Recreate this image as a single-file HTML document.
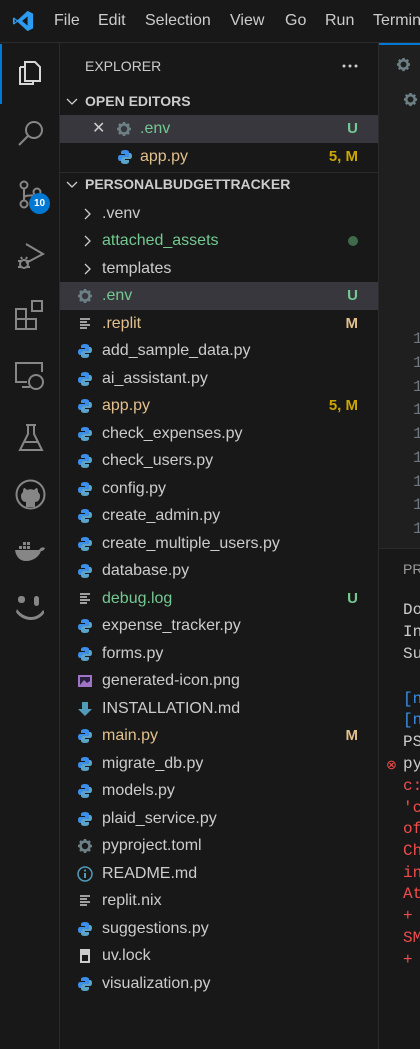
<!DOCTYPE html>
<html><head><meta charset="utf-8"><style>
*{margin:0;padding:0;box-sizing:border-box}
html,body{overflow:hidden}
body{width:420px;height:1049px;background:#181818;font-family:"Liberation Sans",sans-serif;color:#cccccc;position:relative}
.title{position:absolute;left:0;top:0;width:420px;height:43px;background:#181818;border-bottom:1px solid #2b2b2b;overflow:hidden}
.menu{position:absolute;top:12px;font-size:16px;color:#cccccc;white-space:nowrap}
.act{position:absolute;left:0;top:43px;width:60px;height:1006px;background:#181818;border-right:1px solid #2b2b2b}
.side{position:absolute;left:60px;top:43px;width:319px;height:1006px;background:#181818;border-right:1px solid #2b2b2b;overflow:hidden}
.row{position:absolute;left:0;width:318px;height:27.5px;font-size:16px;line-height:27.5px;white-space:nowrap}
.row .n{position:absolute;left:42px}
.row .b{position:absolute;right:20px;font-weight:bold;font-size:15px}
.ic{position:absolute;left:17px;top:6px;width:16px;height:16px}
.sel{background:#37373d}
.g{color:#73c991}.y{color:#e2c08d}.yb{color:#cca700}
.ed{position:absolute;left:379px;top:43px;width:41px;height:505px;background:#1f1f1f;overflow:hidden}
.ln{position:absolute;left:413px;font-family:"Liberation Mono",monospace;font-size:16px;color:#6e7681}
.panel{position:absolute;left:379px;top:548px;width:41px;height:501px;background:#181818;border-top:1px solid #2b2b2b}
.t{position:absolute;left:403px;font-family:"Liberation Mono",monospace;font-size:16px;white-space:nowrap}
.r{color:#f14c4c}.bl{color:#3b8eea}
</style></head><body>
<div class="title">
<svg style="position:absolute;left:12px;top:10px" width="22" height="22" viewBox="0 0 24 24"><path d="M17 1 L23 4 V20 L17 23 L6 13 L2 16 L1 15 V9 L2 8 L6 11 Z M17 7 L11 12 L17 17 Z M3 10 V14 L5 12 Z" fill="#2d9cf0"/></svg>
<span class="menu" style="left:54px">File</span>
<span class="menu" style="left:98px">Edit</span>
<span class="menu" style="left:145px">Selection</span>
<span class="menu" style="left:230px">View</span>
<span class="menu" style="left:285px">Go</span>
<span class="menu" style="left:325px">Run</span>
<span class="menu" style="left:373px">Terminal</span>
</div>
<div class="act">
<div style="position:absolute;left:0;top:1px;width:2px;height:60px;background:#0078d4"></div>
<svg style="position:absolute;left:16px;top:15px" width="28" height="30" viewBox="0 0 28 30" fill="none" stroke="#d7d7d7" stroke-width="2"><path d="M9 4h10l5 5v14H9z"/><path d="M4 9h5M4 9v17h13v-3"/></svg>
<svg style="position:absolute;left:16px;top:75px" width="30" height="30" viewBox="0 0 30 30" fill="none" stroke="#868686" stroke-width="2"><circle cx="18" cy="12" r="8"/><path d="M12 18L3 27"/></svg>
<svg style="position:absolute;left:16px;top:137px" width="28" height="30" viewBox="0 0 28 30" fill="none" stroke="#868686" stroke-width="2"><circle cx="8" cy="5" r="3.5"/><circle cx="8" cy="24" r="3.5"/><circle cx="21" cy="12" r="3.5"/><path d="M8 9v11M8 18c0-4 13-2 13-3"/></svg>
<div style="position:absolute;left:29px;top:150px;width:21px;height:21px;border-radius:50%;background:#0078d4;color:#fff;font-size:10px;font-weight:bold;text-align:center;line-height:21px">10</div>
<svg style="position:absolute;left:14px;top:198px" width="32" height="32" viewBox="0 0 32 32" fill="none" stroke="#868686" stroke-width="2"><path d="M12 3L29 13L12 22"/><circle cx="10" cy="23" r="4"/><path d="M4 20h3M4 26h3M13 20h3M13 26h3M8 18l-1-2M12 18l1-2"/></svg>
<svg style="position:absolute;left:15px;top:257px" width="30" height="32" viewBox="0 0 30 32" fill="none" stroke="#868686" stroke-width="2"><rect x="1" y="9" width="10" height="10"/><rect x="1" y="19" width="10" height="10"/><rect x="11" y="19" width="10" height="10"/><rect x="17" y="1" width="10" height="10"/></svg>
<svg style="position:absolute;left:15px;top:318px" width="30" height="30" viewBox="0 0 30 30" fill="none" stroke="#868686" stroke-width="2"><path d="M12 21H1V2h26v9"/><path d="M7 26h8"/><circle cx="21" cy="21" r="7"/></svg>
<svg style="position:absolute;left:18px;top:380px" width="26" height="30" viewBox="0 0 26 30" fill="none" stroke="#868686" stroke-width="2"><path d="M8 2h10M10 2v9L2 27h22L16 11V2M6 19h14"/></svg>
<svg style="position:absolute;left:15px;top:436px" width="31" height="31" viewBox="0 0 31 31"><circle cx="15.5" cy="15.5" r="14" fill="none" stroke="#868686" stroke-width="2"/><path d="M11 28v-5c-3 0-5-2-5-6 0-2 1-3 2-4 0-1 0-3 1-4 1 0 2 1 3 2 2-1 5-1 7 0 1-1 2-2 3-2 1 1 1 3 1 4 1 1 2 2 2 4 0 4-2 6-5 6v5z" fill="#868686"/></svg>
<svg style="position:absolute;left:14px;top:497px" width="32" height="22" viewBox="0 0 32 22" fill="#868686"><path d="M1 10h24c2-3 4-3 6-2-1 2-2 3-4 3-2 6-8 10-15 10C6 21 2 17 1 10z"/><rect x="5" y="6" width="3" height="3"/><rect x="9" y="6" width="3" height="3"/><rect x="13" y="6" width="3" height="3"/><rect x="9" y="2" width="3" height="3"/><rect x="13" y="2" width="3" height="3"/></svg>
<svg style="position:absolute;left:16px;top:553px" width="28" height="26" viewBox="0 0 28 26" fill="#868686"><rect x="2" y="0" width="7" height="7" rx="3"/><rect x="18" y="0" width="5" height="10" rx="2.5"/><path d="M1 13c4 6 10 8 14 8s9-2 12-7l2 2c-4 6-9 8-14 8S4 22 0 16z"/></svg>
</div>
<div class="side">
<div style="position:absolute;left:25px;top:15px;font-size:14px">EXPLORER</div>
<svg style="position:absolute;left:282px;top:21px" width="16" height="4"><circle cx="2" cy="2" r="1.5" fill="#ccc"/><circle cx="8" cy="2" r="1.5" fill="#ccc"/><circle cx="14" cy="2" r="1.5" fill="#ccc"/></svg>
<div class="row" style="top:45px;font-weight:bold;font-size:14px"><svg style="position:absolute;left:6px;top:10px" width="12" height="8" viewBox="0 0 12 8" fill="none" stroke="#ccc" stroke-width="1.3"><path d="M1 1l5 5 5-5"/></svg><span style="position:absolute;left:25px">OPEN EDITORS</span></div>
<div class="row sel" style="top:72px"><span style="position:absolute;left:32px;font-size:16px">✕</span><svg class="ic" style="left:56px" viewBox="0 0 16 16"><use href="#gear"/></svg><span class="n g" style="left:80px">.env</span><span class="b g">U</span></div>
<div class="row" style="top:100px"><svg class="ic" style="left:57px" viewBox="0 0 16 16"><use href="#py"/></svg><span class="n y" style="left:80px">app.py</span><span class="b yb">5, M</span></div>
<div style="position:absolute;left:0;top:129px;width:318px;height:1px;background:#2b2b2b"></div>
<div class="row" style="top:128px;font-weight:bold;font-size:14px"><svg style="position:absolute;left:6px;top:10px" width="12" height="8" viewBox="0 0 12 8" fill="none" stroke="#ccc" stroke-width="1.3"><path d="M1 1l5 5 5-5"/></svg><span style="position:absolute;left:25px">PERSONALBUDGETTRACKER</span></div>
<div id="tree"></div>
</div>
<svg width="0" height="0" style="position:absolute"><defs>
<g id="py"><path d="M8 1C4 1 4 3 4 3v2h4v1H3S1 6 1 9s2 3 2 3h1v-2s0-2 2-2h4s2 0 2-2V3s0-2-4-2z" fill="#3b8eea"/><path d="M8 15c4 0 4-2 4-2v-2H8v-1h5s2 0 2-3-2-3-2-3h-1v2s0 2-2 2H6S4 8 4 10v3s0 2 4 2z" fill="#5ba3c9"/></g>
<g id="gear"><circle cx="8" cy="8" r="4.5" fill="none" stroke="#6d8086" stroke-width="2.6"/><g stroke="#6d8086" stroke-width="2.6"><path d="M8 1v3M8 12v3M1 8h3M12 8h3M3 3l2 2M11 11l2 2M13 3l-2 2M5 11l-2 2"/></g></g>
</defs></svg>
<script>
var P='<svg class="ic" viewBox="0 0 16 16"><use href="#py"/></svg>';
var G='<svg class="ic" viewBox="0 0 16 16"><use href="#gear"/></svg>';
var L='<svg class="ic" viewBox="0 0 16 16" stroke="#cccccc" stroke-width="1.5"><path d="M3 3h10M3 6h7M3 9h10M3 12h7"/></svg>';
var C='<svg style="position:absolute;left:24px;top:8px" width="8" height="12" viewBox="0 0 8 12" fill="none" stroke="#ccc" stroke-width="1.3"><path d="M1 1l5 5-5 5"/></svg>';
var items=[
[C,'.venv','',''],[C,'attached_assets','g','●'],[C,'templates','',''],
[G,'.env','g','U',1],[L,'.replit','y','M'],[P,'add_sample_data.py'],[P,'ai_assistant.py'],[P,'app.py','y','5, M'],
[P,'check_expenses.py'],[P,'check_users.py'],[P,'config.py'],[P,'create_admin.py'],[P,'create_multiple_users.py'],[P,'database.py'],
[L,'debug.log','g','U'],[P,'expense_tracker.py'],[P,'forms.py'],
['<svg class="ic" viewBox="0 0 16 16"><rect x="1" y="2" width="14" height="12" fill="#a074c4"/><rect x="3" y="4" width="10" height="8" fill="#2a2040"/><path d="M3 12l4-5 3 3 3-2v4z" fill="#a074c4"/></svg>','generated-icon.png'],
['<svg class="ic" viewBox="0 0 16 16"><path d="M5 1h6v7h4l-7 7-7-7h4z" fill="#519aba"/></svg>','INSTALLATION.md'],
[P,'main.py','y','M'],[P,'migrate_db.py'],[P,'models.py'],[P,'plaid_service.py'],[G,'pyproject.toml'],
['<svg class="ic" viewBox="0 0 16 16"><circle cx="8" cy="8" r="7" fill="none" stroke="#519aba" stroke-width="1.5"/><path d="M8 7v5" stroke="#519aba" stroke-width="2"/><circle cx="8" cy="4.5" r="1.1" fill="#519aba"/></svg>','README.md'],[L,'replit.nix'],[P,'suggestions.py'],
['<svg class="ic" viewBox="0 0 16 16"><rect x="3" y="1" width="10" height="14" fill="#cccccc"/><rect x="5" y="7" width="6" height="6" fill="#181818"/></svg>','uv.lock'],[P,'visualization.py']];
var h='';
items.forEach(function(it,i){
 var top=156.5+27.5*i;
 var col=it[2]||'';var b=it[3]||'';
 var bc=(b=='5, M')?'yb':col;
 var badge=b=='●'?'<span style="position:absolute;right:20px;top:9px;width:10px;height:10px;border-radius:50%;background:#3f6b4c"></span>':(b?'<span class="b '+bc+'">'+b+'</span>':'');
 h+='<div class="row'+(it[4]?' sel':'')+'" style="top:'+top+'px">'+it[0]+'<span class="n '+col+'">'+it[1]+'</span>'+badge+'</div>';
});
document.getElementById('tree').innerHTML=h;
</script>
<div class="ed">
<div style="position:absolute;left:0;top:0;width:41px;height:2px;background:#0078d4"></div>
<svg style="position:absolute;left:17px;top:14px" width="15" height="15" viewBox="0 0 16 16"><use href="#gear"/></svg>
<svg style="position:absolute;left:24px;top:49px" width="15" height="15" viewBox="0 0 16 16"><use href="#gear"/></svg>
</div>
<div class="ln" style="top:330px">1</div><div class="ln" style="top:354px">1</div><div class="ln" style="top:378px">1</div><div class="ln" style="top:401px">1</div><div class="ln" style="top:425px">1</div><div class="ln" style="top:449px">1</div><div class="ln" style="top:473px">1</div><div class="ln" style="top:496px">1</div><div class="ln" style="top:520px">1</div>
<div class="panel"></div>
<div class="t" style="top:561px;font-family:'Liberation Sans',sans-serif;font-size:14px;color:#9d9d9d">PROBLEMS</div>
<div class="t" style="top:601px">Done</div>
<div class="t" style="top:623px">Inst</div>
<div class="t" style="top:645px">Succ</div>
<div class="t bl" style="top:690px">[notice]</div>
<div class="t bl" style="top:711px">[notice]</div>
<div class="t" style="top:733px">PS C:</div>
<span style="position:absolute;left:386px;top:757px;color:#f14c4c;font-size:13px">⊗</span>
<div class="t" style="top:755px">pyth</div>
<div class="t r" style="top:777px">c:\</div>
<div class="t r" style="top:799px">'cmd</div>
<div class="t r" style="top:820px">of a</div>
<div class="t r" style="top:842px">Chec</div>
<div class="t r" style="top:864px">incl</div>
<div class="t r" style="top:885px">At l</div>
<div class="t r" style="top:907px">+ py</div>
<div class="t r" style="top:929px">SMS</div>
<div class="t r" style="top:951px">+ </div>
</body></html>
